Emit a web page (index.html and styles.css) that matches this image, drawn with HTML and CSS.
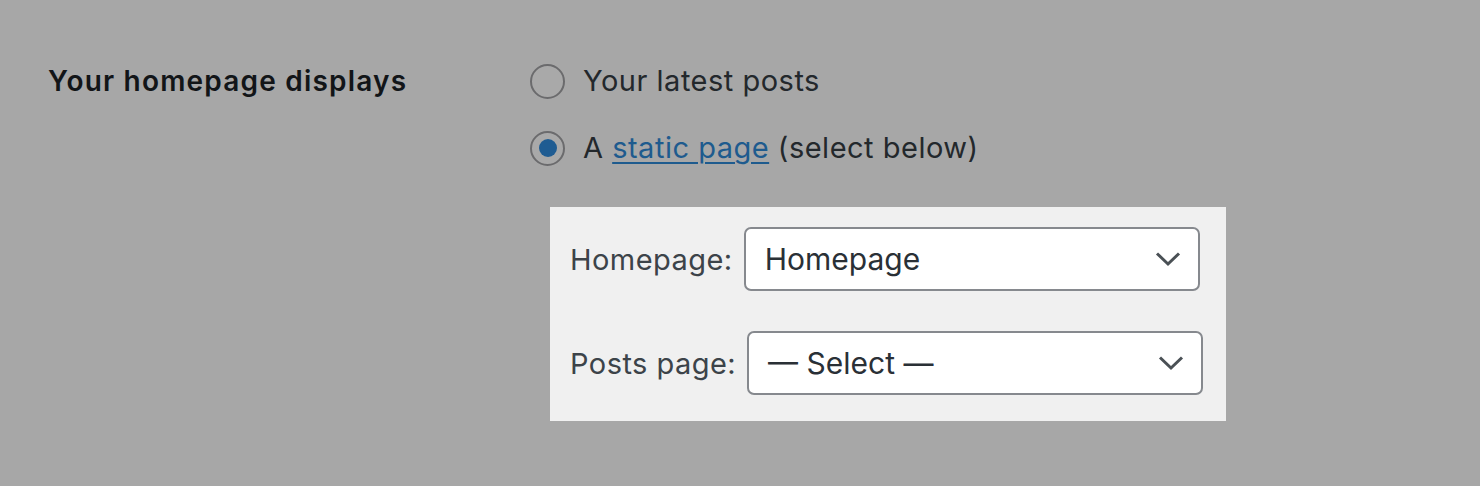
FILE: index.html
```html
<!DOCTYPE html>
<html lang="en">
<head>
<meta charset="utf-8">
<title>Reading settings</title>
<link rel="stylesheet" href="styles.css">
</head>
<body>
<div class="setting">
  <div class="setting-label">Your homepage displays</div>
  <div class="setting-field">
    <label class="radio-row">
      <span class="radio"></span>
      <span class="radio-text">Your latest posts</span>
    </label>
    <label class="radio-row">
      <span class="radio checked"><span class="dot"></span></span>
      <span class="radio-text">A <a class="link" href="#">static page</a> (select below)</span>
    </label>
    <div class="pages-box">
      <div class="page-row">
        <span class="page-label">Homepage:</span>
        <div class="select">
          <span class="select-value">Homepage</span>
          <svg class="chevron" width="26" height="16" viewBox="0 0 26 16"><path d="M2 2.5 L13 13 L24 2.5" fill="none" stroke="#4a5055" stroke-width="3"/></svg>
        </div>
      </div>
      <div class="page-row">
        <span class="page-label">Posts page:</span>
        <div class="select">
          <span class="select-value">— Select —</span>
          <svg class="chevron" width="26" height="16" viewBox="0 0 26 16"><path d="M2 2.5 L13 13 L24 2.5" fill="none" stroke="#4a5055" stroke-width="3"/></svg>
        </div>
      </div>
    </div>
  </div>
</div>
</body>
</html>
```
FILE: styles.css
```css
html, body {
  margin: 0;
  padding: 0;
}
body {
  background: #a7a7a7;
  width: 1480px;
  height: 486px;
  overflow: hidden;
  font-family: Inter, "Liberation Sans", sans-serif;
}
.setting {
  display: flex;
  padding: 64px 0 0 48px;
}
.setting-label {
  width: 482px;
  font-size: 28px;
  font-weight: 600;
  letter-spacing: 1.2px;
  color: #121518;
  line-height: 34px;
}
.setting-field {
  display: flex;
  flex-direction: column;
}
.radio-row {
  display: flex;
  align-items: center;
  gap: 18px;
  height: 34px;
  margin-bottom: 33px;
}
.radio {
  box-sizing: border-box;
  width: 35px;
  height: 35px;
  border: 2px solid #6b6b6d;
  border-radius: 50%;
  background: #a9a9a9;
  display: flex;
  align-items: center;
  justify-content: center;
}
.dot {
  width: 18px;
  height: 18px;
  border-radius: 50%;
  background: #1f5c92;
}
.radio-text {
  font-size: 29px;
  letter-spacing: 0.5px;
  color: #23282c;
  line-height: 34px;
}
.link {
  color: #1e5b8e;
  text-decoration: underline;
  text-decoration-thickness: 2px;
  text-underline-offset: 4px;
}
.pages-box {
  margin-left: 20px;
  margin-top: 9px;
  width: 676px;
  box-sizing: border-box;
  background: #f0f0f0;
  padding: 20px 0 26px 20px;
  display: flex;
  flex-direction: column;
  gap: 40px;
}
.page-row {
  display: flex;
  align-items: center;
  gap: 11px;
}
.page-label {
  font-size: 29px;
  letter-spacing: 0.45px;
  color: #3c4349;
}
.select {
  box-sizing: border-box;
  width: 456px;
  height: 64px;
  background: #fff;
  border: 2px solid #86898e;
  border-radius: 7px;
  display: flex;
  align-items: center;
  justify-content: space-between;
  padding: 0 17px 0 19px;
}
.select-value {
  font-size: 30px;
  color: #2a3036;
}
```
